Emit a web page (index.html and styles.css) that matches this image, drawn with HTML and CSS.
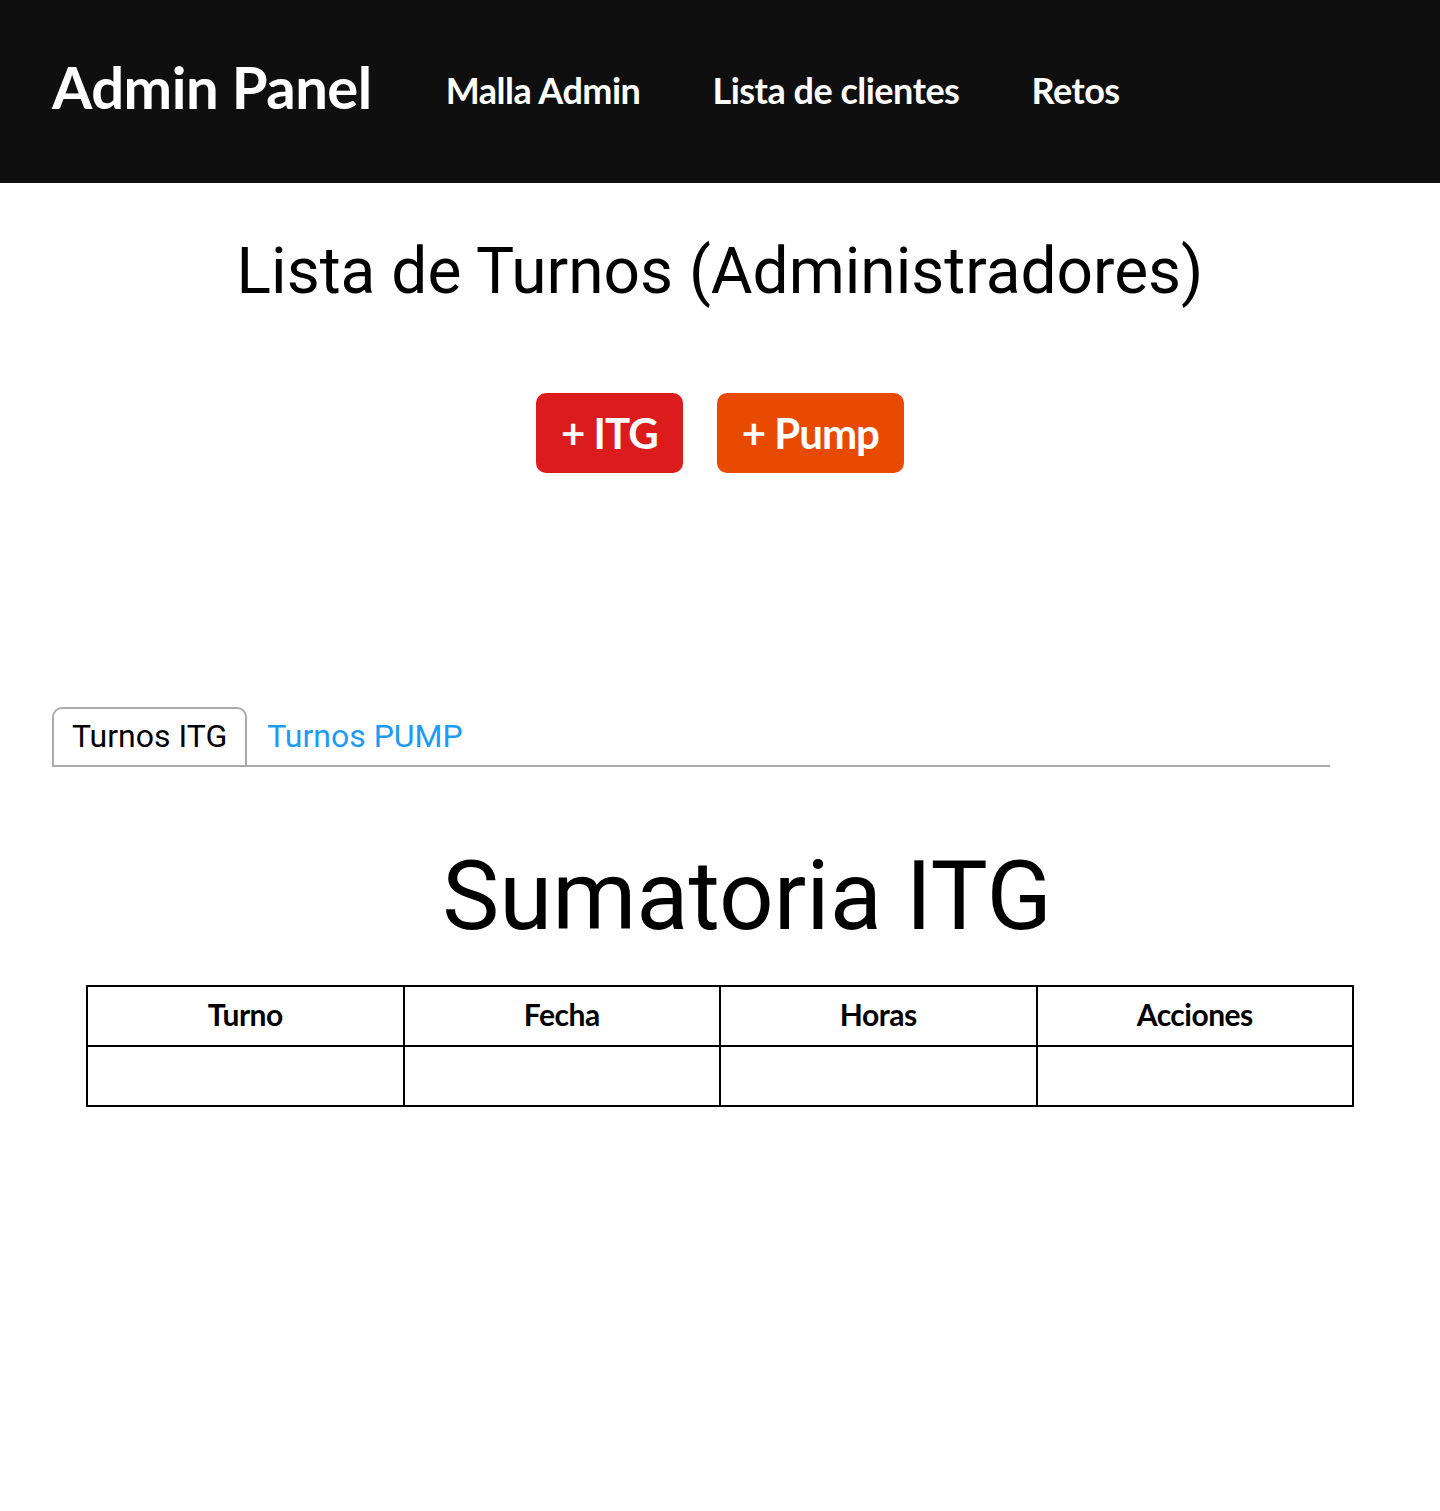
FILE: index.html
```html
<!DOCTYPE html>
<html lang="es">
<head>
<meta charset="utf-8">
<title>Admin Panel</title>
<link rel="stylesheet" href="styles.css">
</head>
<body>
<header class="navbar">
  <a class="brand" href="#">Admin Panel</a>
  <nav class="nav-links">
    <a href="#">Malla Admin</a>
    <a href="#">Lista de clientes</a>
    <a href="#">Retos</a>
  </nav>
</header>
<main>
  <h1 class="page-title">Lista de Turnos (Administradores)</h1>
  <div class="actions">
    <button class="btn btn-itg">+ ITG</button>
    <button class="btn btn-pump">+ Pump</button>
  </div>
  <ul class="tabs">
    <li class="tab active">Turnos ITG</li>
    <li class="tab">Turnos PUMP</li>
  </ul>
  <section class="panel">
    <h2 class="panel-title">Sumatoria ITG</h2>
  </section>
  <table class="shifts">
    <thead>
      <tr><th>Turno</th><th>Fecha</th><th>Horas</th><th>Acciones</th></tr>
    </thead>
    <tbody>
      <tr><td></td><td></td><td></td><td></td></tr>
    </tbody>
  </table>
</main>
</body>
</html>
```
FILE: styles.css
```css
html, body {
  margin: 0;
  padding: 0;
  background: #fff;
}
body {
  font-family: Roboto, "Liberation Sans", sans-serif;
  color: #000;
}
.navbar {
  height: 183px;
  background: #0f0f0f;
  display: flex;
  align-items: center;
  padding: 0 0 4px 52px;
  box-sizing: border-box;
}
.brand {
  font-family: Lato, "Open Sans", sans-serif;
  font-weight: 700;
  font-size: 58px;
  color: #fff;
  text-decoration: none;
  letter-spacing: -0.5px;
  margin: 0 74px 6px 0;
}
.nav-links {
  display: flex;
  gap: 72px;
}
.nav-links a {
  font-family: Lato, "Open Sans", sans-serif;
  font-weight: 700;
  font-size: 36px;
  color: #fff;
  text-decoration: none;
  letter-spacing: -0.5px;
}
main {
  display: flex;
  flex-direction: column;
}
.page-title {
  font-family: Roboto, sans-serif;
  font-weight: 400;
  font-size: 64px;
  line-height: 75px;
  text-align: center;
  margin: 51px 0 0;
}
.actions {
  display: flex;
  justify-content: center;
  gap: 34px;
  margin-top: 84px;
}
.btn {
  height: 80px;
  padding: 0 25px;
  border: none;
  border-radius: 10px;
  color: #fff;
  font-family: Lato, "Open Sans", sans-serif;
  font-weight: 700;
  font-size: 42px;
  letter-spacing: -1px;
  display: inline-flex;
  align-items: center;
}
.btn-itg { background: #dc1c1c; }
.btn-pump { background: #e84a02; }
.tabs {
  list-style: none;
  margin: 234px 0 0 52px;
  padding: 0;
  width: 1278px;
  display: flex;
  border-bottom: 2px solid #aaa;
}
.tab {
  font-size: 32px;
  line-height: 37.5px;
  padding: 9px 18px;
  border: 2px solid transparent;
  border-bottom: none;
  color: #1e9bf0;
}
.tab.active {
  color: #000;
  border-color: #aaa;
  border-radius: 10px 10px 0 0;
}
.panel {
  padding-left: 54px;
}
.panel-title {
  font-weight: 400;
  font-size: 96px;
  line-height: 112px;
  text-align: center;
  margin: 73px 0 0;
}
.shifts {
  width: 1268px;
  margin: 33px auto 0;
  border-collapse: collapse;
  table-layout: fixed;
}
.shifts th, .shifts td {
  border: 2px solid #000;
  height: 55px;
  padding: 0 0 3px;
  text-align: center;
}
.shifts th {
  font-family: Lato, "Open Sans", sans-serif;
  font-weight: 700;
  font-size: 30px;
  letter-spacing: -0.5px;
}
```
